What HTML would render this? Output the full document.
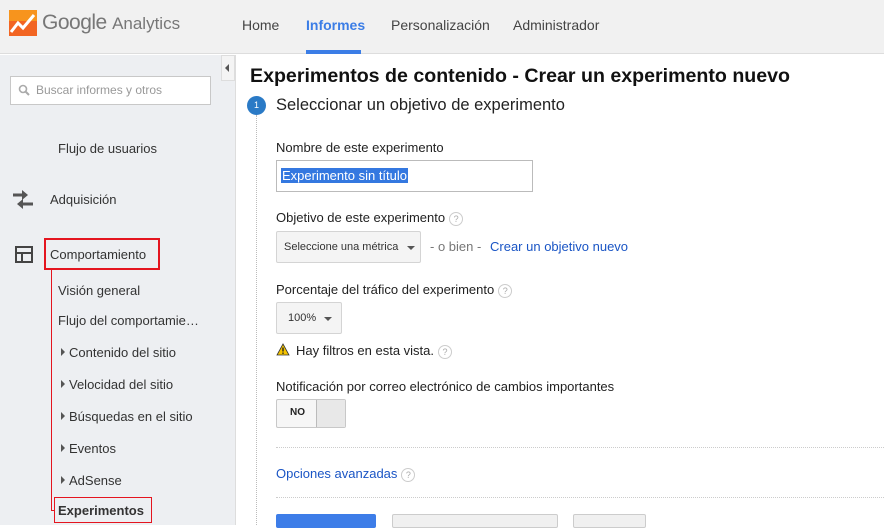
<!DOCTYPE html>
<html><head><meta charset="utf-8"><style>
*{margin:0;padding:0;box-sizing:border-box}
body{width:884px;height:525px;overflow:hidden;position:relative;background:#fff;font-family:"Liberation Sans",Arial,sans-serif;color:#222}
.a{position:absolute;white-space:nowrap}
#hdr{left:0;top:0;width:884px;height:54px;background:#f1f1f1;border-bottom:1px solid #ddd}
#side{left:0;top:55px;width:236px;height:470px;background:#edeff2;border-right:1px solid #ddd}
.nav{font-size:14px;color:#444;top:17px}
.s{font-size:13px;color:#333}
.lbl{font-size:13px;color:#222}
.q{display:inline-block;width:14px;height:14px;border:1px solid #ccc;border-radius:50%;font-size:9px;color:#aaa;text-align:center;line-height:12px;vertical-align:middle;margin-left:4px}
.tri{display:inline-block;width:0;height:0;border-left:4px solid #555;border-top:4px solid transparent;border-bottom:4px solid transparent;margin-right:4px;vertical-align:1px}
.dd{border:1px solid #d4d4d4;border-radius:2px;background:#f4f4f4}
.caret{display:inline-block;width:0;height:0;border-top:4px solid #555;border-left:4px solid transparent;border-right:4px solid transparent}
</style></head><body>
<div class="a" id="hdr"></div>
<svg class="a" style="left:9px;top:10px" width="28" height="26" viewBox="0 0 28 26"><rect width="28" height="26" fill="#f26522"/><rect width="28" height="11" fill="#f7941d"/><polyline points="2,22 9,13 14,18 25,5" fill="none" stroke="#fff" stroke-width="3"/></svg>
<div class="a" style="left:42px;top:11px;font-size:21px;color:#777;letter-spacing:-0.5px">Google <span style="font-size:17px;letter-spacing:0">Analytics</span></div>
<div class="a nav" style="left:242px">Home</div>
<div class="a nav" style="left:306px;color:#3b7de6;font-weight:bold">Informes</div>
<div class="a" style="left:306px;top:50px;width:55px;height:4px;background:#3b7de6"></div>
<div class="a nav" style="left:391px">Personalización</div>
<div class="a nav" style="left:513px">Administrador</div>

<div class="a" id="side"></div>
<div class="a" style="left:221px;top:55px;width:14px;height:26px;background:#f4f4f4;border:1px solid #ddd"><div style="margin:8px 0 0 3px;width:0;height:0;border-right:4px solid #555;border-top:4px solid transparent;border-bottom:4px solid transparent"></div></div>
<div class="a" style="left:10px;top:76px;width:201px;height:29px;background:#fff;border:1px solid #c8c8c8"></div>
<svg class="a" style="left:18px;top:84px" width="12" height="12"><circle cx="5" cy="5" r="3.5" fill="none" stroke="#aaa" stroke-width="1.6"/><line x1="7.5" y1="7.5" x2="11" y2="11" stroke="#aaa" stroke-width="2"/></svg>
<div class="a" style="left:36px;top:83px;font-size:12px;color:#999">Buscar informes y otros</div>
<div class="a s" style="left:58px;top:141px">Flujo de usuarios</div>
<svg class="a" style="left:13px;top:189px" width="22" height="22"><path d="M0 6h12" stroke="#555" stroke-width="3"/><path d="M9 1l6 5-6 5z" fill="#555"/><path d="M20 15H8" stroke="#555" stroke-width="3"/><path d="M10 10l-6 5 6 5z" fill="#555"/></svg>
<div class="a s" style="left:50px;top:192px">Adquisición</div>
<div class="a" style="left:15px;top:246px;width:18px;height:17px;border:2px solid #444"></div>
<div class="a" style="left:15px;top:252px;width:18px;height:2px;background:#444"></div>
<div class="a" style="left:21px;top:252px;width:2px;height:11px;background:#444"></div>
<div class="a" style="left:44px;top:238px;width:116px;height:32px;border:2px solid #e4151f"></div>
<div class="a s" style="left:50px;top:247px">Comportamiento</div>
<div class="a" style="left:51px;top:270px;width:1px;height:241px;background:#e4151f"></div>
<div class="a" style="left:51px;top:510px;width:4px;height:1px;background:#e4151f"></div>
<div class="a s" style="left:58px;top:283px">Visión general</div>
<div class="a s" style="left:58px;top:313px">Flujo del comportamie…</div>
<div class="a s" style="left:61px;top:345px"><span class="tri"></span>Contenido del sitio</div>
<div class="a s" style="left:61px;top:377px"><span class="tri"></span>Velocidad del sitio</div>
<div class="a s" style="left:61px;top:409px"><span class="tri"></span>Búsquedas en el sitio</div>
<div class="a s" style="left:61px;top:441px"><span class="tri"></span>Eventos</div>
<div class="a s" style="left:61px;top:473px"><span class="tri"></span>AdSense</div>
<div class="a" style="left:54px;top:497px;width:98px;height:26px;border:1px solid #e4151f"></div>
<div class="a s" style="left:58px;top:503px;font-weight:bold">Experimentos</div>

<div class="a" style="left:250px;top:65px;font-size:19.6px;font-weight:bold;color:#111">Experimentos de contenido - Crear un experimento nuevo</div>
<div class="a" style="left:256px;top:115px;width:0;height:410px;border-left:1px dotted #bbb"></div>
<div class="a" style="left:247px;top:96px;width:19px;height:19px;border-radius:50%;background:#2a7ac6;color:#fff;font-size:9px;text-align:center;line-height:19px">1</div>
<div class="a" style="left:276px;top:96px;font-size:16.5px;color:#222">Seleccionar un objetivo de experimento</div>
<div class="a lbl" style="left:276px;top:140px">Nombre de este experimento</div>
<div class="a" style="left:276px;top:160px;width:257px;height:32px;border:1px solid #bbb;background:#fff"></div>
<div class="a" style="left:281px;top:168px;font-size:13px;background:#3478e0;color:#fff;padding:0 1px">Experimento sin título</div>
<div class="a lbl" style="left:276px;top:210px">Objetivo de este experimento<span class="q">?</span></div>
<div class="a dd" style="left:276px;top:231px;width:145px;height:32px"></div>
<div class="a" style="left:284px;top:241px;font-size:11px;color:#333">Seleccione una métrica <span class="caret" style="margin-left:6px"></span></div>
<div class="a" style="left:430px;top:239px;font-size:13px;color:#777">- o bien -</div>
<div class="a" style="left:490px;top:239px;font-size:13px;color:#1a55c5">Crear un objetivo nuevo</div>
<div class="a lbl" style="left:276px;top:282px">Porcentaje del tráfico del experimento<span class="q">?</span></div>
<div class="a dd" style="left:276px;top:302px;width:66px;height:32px"></div>
<div class="a" style="left:288px;top:312px;font-size:11px;color:#333">100% <span class="caret" style="margin-left:5px"></span></div>
<svg class="a" style="left:276px;top:343px" width="14" height="13"><path d="M7 1L13 12H1z" fill="#f5c400" stroke="#333" stroke-width="0.8"/><rect x="6.3" y="4.5" width="1.4" height="4" fill="#222"/><rect x="6.3" y="9.5" width="1.4" height="1.4" fill="#222"/></svg>
<div class="a lbl" style="left:296px;top:343px">Hay filtros en esta vista.<span class="q">?</span></div>
<div class="a lbl" style="left:276px;top:379px">Notificación por correo electrónico de cambios importantes</div>
<div class="a" style="left:276px;top:399px;width:70px;height:29px;border:1px solid #c8c8c8;border-radius:2px;background:#f6f6f6"></div>
<div class="a" style="left:316px;top:400px;width:29px;height:27px;background:#e8e8e8;border-left:1px solid #bbb"></div>
<div class="a" style="left:290px;top:407px;font-size:10px;font-weight:bold;color:#222">NO</div>
<div class="a" style="left:276px;top:447px;width:608px;border-top:1px dotted #ccc"></div>
<div class="a" style="left:276px;top:466px;font-size:13px;color:#1a55c5">Opciones avanzadas<span class="q">?</span></div>
<div class="a" style="left:276px;top:497px;width:608px;border-top:1px dotted #ccc"></div>
<div class="a" style="left:276px;top:514px;width:100px;height:14px;background:#3d7de8;border-radius:2px"></div>
<div class="a" style="left:392px;top:514px;width:166px;height:14px;background:#f0f0f0;border:1px solid #ccc;border-radius:2px"></div>
<div class="a" style="left:573px;top:514px;width:73px;height:14px;background:#f0f0f0;border:1px solid #ccc;border-radius:2px"></div>
</body></html>
